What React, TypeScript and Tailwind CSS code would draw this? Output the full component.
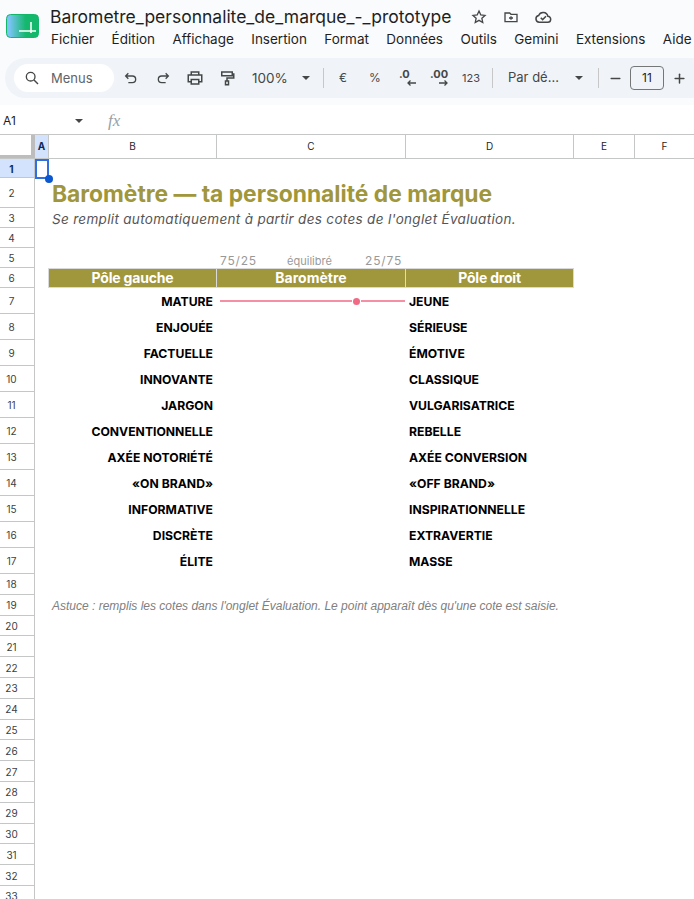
import { Minus, Plus } from "lucide-react";

const rowsLeft = [
  ["MATURE", "JEUNE"],
  ["ENJOUÉE", "SÉRIEUSE"],
  ["FACTUELLE", "ÉMOTIVE"],
  ["INNOVANTE", "CLASSIQUE"],
  ["JARGON", "VULGARISATRICE"],
  ["CONVENTIONNELLE", "REBELLE"],
  ["AXÉE NOTORIÉTÉ", "AXÉE CONVERSION"],
  ["«ON BRAND»", "«OFF BRAND»"],
  ["INFORMATIVE", "INSPIRATIONNELLE"],
  ["DISCRÈTE", "EXTRAVERTIE"],
  ["ÉLITE", "MASSE"],
];

function Slot({ children, className = "w-8" }: { children: React.ReactNode; className?: string }) {
  return <div className={`flex shrink-0 items-center justify-center ${className}`}>{children}</div>;
}

function Ico({ children, className = "size-[18px]" }: { children: React.ReactNode; className?: string }) {
  return (
    <svg viewBox="0 0 24 24" fill="none" stroke="#444746" strokeWidth="2" className={`shrink-0 ${className}`}>
      {children}
    </svg>
  );
}

function Caret({ className = "" }: { className?: string }) {
  return <span className={`block h-0 w-0 shrink-0 border-x-[4px] border-t-[4px] border-x-transparent border-t-[#444746] ${className}`} />;
}

function Divider({ className = "" }: { className?: string }) {
  return <span className={`block h-5 w-px shrink-0 bg-[#c7c7c7] ${className}`} />;
}

function Row({ num, h, active, children }: { num: number; h: string; active?: boolean; children?: React.ReactNode }) {
  return (
    <div className={`flex shrink-0 ${h}`}>
      <div className={`flex w-[35px] shrink-0 items-center justify-center border-r border-b border-[#c4c7c5] pt-[2px] pr-[11px] text-[10px] ${active ? "bg-[#d3e3fd] font-bold text-[#0b2a5c]" : "text-[#3c4043]"}`}>
        {num}
      </div>
      <div className="flex min-w-0 flex-1">{children}</div>
    </div>
  );
}

export default function App() {
  return (
    <div className="flex h-[899px] w-[694px] flex-col overflow-hidden bg-white font-['Inter',sans-serif] text-[#1f1f1f]">
      {/* top bar */}
      <div className="h-[105px] shrink-0 bg-[#f9fbfd]">
        <div className="flex pl-[6px] pt-[6px]">
          <svg viewBox="0 0 33 24" className="mt-[8px] h-6 w-[33px] shrink-0">
            <defs>
              <linearGradient id="lg" x1="0" x2="1" y1="0" y2="0">
                <stop offset="0.08" stopColor="#7cc4f8" />
                <stop offset="0.6" stopColor="#13b86d" />
              </linearGradient>
            </defs>
            <rect x="0.5" y="0.5" width="32" height="23" rx="4" fill="url(#lg)" stroke="#12b76a" />
            <path d="M13 17h17M25 8v11" stroke="#fff" strokeWidth="1.5" fill="none" />
          </svg>
          <div className="ml-[11px] min-w-0">
            <div className="flex h-[22px] items-center">
              <span className="whitespace-nowrap text-[17.5px] text-[#1f1f1f]">Barometre_personnalite_de_marque_-_prototype</span>
              <Ico className="ml-[19px] size-4">
                <path d="M12 3l2.7 5.9 6.3.7-4.7 4.3 1.3 6.3-5.6-3.2-5.6 3.2 1.3-6.3L3 9.6l6.3-.7z" />
              </Ico>
              <Ico className="ml-[16px] size-4">
                <path d="M3 6h7l2 2h9v11H3zM9 13.5h6M12 11v5" />
              </Ico>
              <Ico className="ml-[15px] size-[18px]">
                <path d="M7 19a4.5 4.5 0 0 1-.8-8.9A6.5 6.5 0 0 1 18.5 11 4 4 0 0 1 18 19zM9 13l2.5 2.5L16 11" />
              </Ico>
            </div>
            <div className="mt-[1px] ml-px flex gap-[17.4px] whitespace-nowrap text-[13.5px] leading-5 text-[#1f1f1f]">
              <span>Fichier</span>
              <span>Édition</span>
              <span>Affichage</span>
              <span>Insertion</span>
              <span>Format</span>
              <span>Données</span>
              <span>Outils</span>
              <span>Gemini</span>
              <span>Extensions</span>
              <span>Aide</span>
            </div>
          </div>
        </div>
        {/* toolbar */}
        <div className="mt-[9px] ml-[5px] flex h-10 w-[689px] items-center rounded-l-[20px] bg-[#f0f4f9] pl-[9px] text-[#444746]">
          <div className="flex h-7 w-[100px] shrink-0 items-center rounded-full bg-white pl-[10px] text-[13px] text-[#5f6368]">
            <Ico className="size-4">
              <circle cx="10" cy="10" r="6.5" />
              <path d="M15 15l6 6" />
            </Ico>
            <span className="ml-[11px] pt-px">Menus</span>
          </div>
          <Slot className="ml-[1px] w-8">
            <Ico className="size-4">
              <path d="M8 5L4 9l4 4M4 9h10a5 5 0 0 1 0 10H8" />
            </Ico>
          </Slot>
          <Slot>
            <Ico className="size-4">
              <path d="M16 5l4 4-4 4M20 9H10a5 5 0 0 0 0 10h6" />
            </Ico>
          </Slot>
          <Slot>
            <Ico>
              <path d="M7 8V4h10v4M7 17H3v-9h18v9h-4M7 14h10v6H7z" />
            </Ico>
          </Slot>
          <Slot>
            <Ico>
              <path d="M5 4h14v5H5zM19 6.5h2V12h-9v4M10 16h4v5h-4z" />
            </Ico>
          </Slot>
          <span className="ml-[9px] w-9 whitespace-nowrap text-[13.5px]">100%</span>
          <Caret className="ml-[14px]" />
          <Divider className="ml-[13px]" />
          <Slot className="ml-[3px] w-8"><span className="text-[12px]">€</span></Slot>
          <Slot><span className="text-[12px]">%</span></Slot>
          <Slot>
            <span className="relative h-3 w-4 -translate-y-[4px] whitespace-nowrap text-[11px] font-bold leading-3">
              .0
              <svg viewBox="0 0 9 6" fill="none" stroke="#444746" strokeWidth="1.3" className="absolute left-[8px] top-[12px] h-[6px] w-[9px]">
                <path d="M9 3H1M3.5 .5L1 3l2.5 2.5" />
              </svg>
            </span>
          </Slot>
          <Slot>
            <span className="relative h-3 w-[18px] -translate-y-[4px] whitespace-nowrap text-[11px] font-bold leading-3">
              .00
              <svg viewBox="0 0 9 6" fill="none" stroke="#444746" strokeWidth="1.3" className="absolute left-[9px] top-[12px] h-[6px] w-[9px]">
                <path d="M0 3h8M5.5 .5L8 3 5.5 5.5" />
              </svg>
            </span>
          </Slot>
          <Slot><span className="text-[11px]">123</span></Slot>
          <Divider className="ml-[5px]" />
          <span className="ml-[15px] w-[53px] whitespace-nowrap text-[13px]">Par dé...</span>
          <Caret className="ml-[14px]" />
          <Divider className="ml-[15px]" />
          <Slot><Minus className="size-[15px]" strokeWidth={2.2} /></Slot>
          <span className="-ml-[1px] flex h-6 w-[34px] shrink-0 items-center justify-center rounded border border-[#747775] text-[12px] text-[#1f1f1f]">11</span>
          <Slot className="w-[30px]"><Plus className="size-[15px]" strokeWidth={2.4} /></Slot>
        </div>
      </div>

      {/* formula bar */}
      <div className="flex h-[30px] shrink-0 items-center border-b border-[#c4c7c5] pl-[3px] pt-[2px] text-[12px]">
        <span className="w-[72px]">A1</span>
        <Caret />
        <span className="ml-[25px] font-['Liberation_Serif',serif] text-[17px] italic text-[#9aa0a6]">fx</span>
      </div>

      {/* column headers */}
      <div className="flex h-6 shrink-0 border-b border-[#c4c7c5] text-[10px]">
        <div className="w-[35px] shrink-0 border-r-[4px] border-b-[3px] border-[#bdbdbd]" />
        <div className="flex w-[14px] shrink-0 items-center justify-center border-r border-[#c4c7c5] bg-[#d3e3fd] font-bold text-[#0b2a5c]">A</div>
        <div className="flex w-[168px] shrink-0 items-center justify-center border-r border-[#c4c7c5]">B</div>
        <div className="flex w-[189px] shrink-0 items-center justify-center border-r border-[#c4c7c5]">C</div>
        <div className="flex w-[168px] shrink-0 items-center justify-center border-r border-[#c4c7c5]">D</div>
        <div className="flex w-[61px] shrink-0 items-center justify-center border-r border-[#c4c7c5]">E</div>
        <div className="flex flex-1 items-center justify-center">F</div>
      </div>

      {/* sheet */}
      <div className="relative flex min-h-0 flex-1 flex-col overflow-hidden">
        <div className="absolute left-[35px] top-0 h-5 w-[14px] border-2 border-[#2f6fe0]" />
        <div className="absolute left-[45px] top-4 size-2 rounded-full bg-[#0b57d0]" />

        <Row num={1} h="h-[19px]" active />
        <Row num={2} h="h-[30px]">
          <span className="ml-[17px] whitespace-nowrap text-[22.8px] font-bold leading-[32px] text-[#a0963c]">Baromètre — ta personnalité de marque</span>
        </Row>
        <Row num={3} h="h-5">
          <span className="ml-[17px] whitespace-nowrap text-[13.5px] italic leading-[22px] tracking-[0.32px] text-[#555555]">Se remplit automatiquement à partir des cotes de l'onglet Évaluation.</span>
        </Row>
        <Row num={4} h="h-5" />
        <Row num={5} h="h-5">
          <div className="ml-[14px] w-[167px] shrink-0" />
          <div className="-mb-px flex w-[189px] shrink-0 items-end justify-between pl-[4px] pr-[3px] text-[12px] leading-4 tracking-[0.8px] text-[#999999]">
            <span>75/25</span>
            <span className="mr-[3px] text-[11px] tracking-normal">équilibré</span>
            <span>25/75</span>
          </div>
        </Row>
        <Row num={6} h="h-5">
          <div className="ml-[13px] flex pt-0 text-[14px] font-bold leading-5 text-white">
            <div className="flex w-[168px] items-center justify-center border border-r-0 border-[#d9d9d9] bg-[#a0963c] tracking-[-0.2px]">Pôle gauche</div>
            <div className="flex w-[189px] items-center justify-center border border-r-0 border-[#d9d9d9] bg-[#a0963c]">Baromètre</div>
            <div className="flex w-[169px] items-center justify-center border border-[#d9d9d9] bg-[#a0963c] tracking-[-0.2px]">Pôle droit</div>
          </div>
        </Row>
        {rowsLeft.map(([left, right], i) => (
          <Row key={left} num={i + 7} h="h-[26px]">
            <div className="ml-[13px] flex w-[168px] shrink-0 items-center justify-end pt-[2px] pr-[3px] text-[12.2px] font-bold text-black">{left}</div>
            <div className="flex w-[189px] shrink-0 items-center pl-[4px]">
              {i === 0 && (
                <div className="flex w-full items-center">
                  <span className="h-[2px] flex-1 bg-[#f58fa3]" />
                  <span className="mx-px size-[7px] rounded-full bg-[#f06a86]" />
                  <span className="h-[2px] w-[44px] bg-[#f58fa3]" />
                </div>
              )}
            </div>
            <div className="flex w-[168px] shrink-0 items-center pt-[2px] pl-[4px] text-[12.2px] font-bold text-black">{right}</div>
          </Row>
        ))}
        <Row num={18} h="h-[20.8px]" />
        <Row num={19} h="h-[20.8px]">
          <span className="ml-[17px] whitespace-nowrap font-['Liberation_Sans',sans-serif] text-[12px] italic leading-[22px] text-[#808080]">Astuce : remplis les cotes dans l'onglet Évaluation. Le point apparaît dès qu'une cote est saisie.</span>
        </Row>
        {Array.from({ length: 14 }, (_, i) => (
          <Row key={i} num={i + 20} h="h-[20.8px]" />
        ))}
      </div>
    </div>
  );
}
